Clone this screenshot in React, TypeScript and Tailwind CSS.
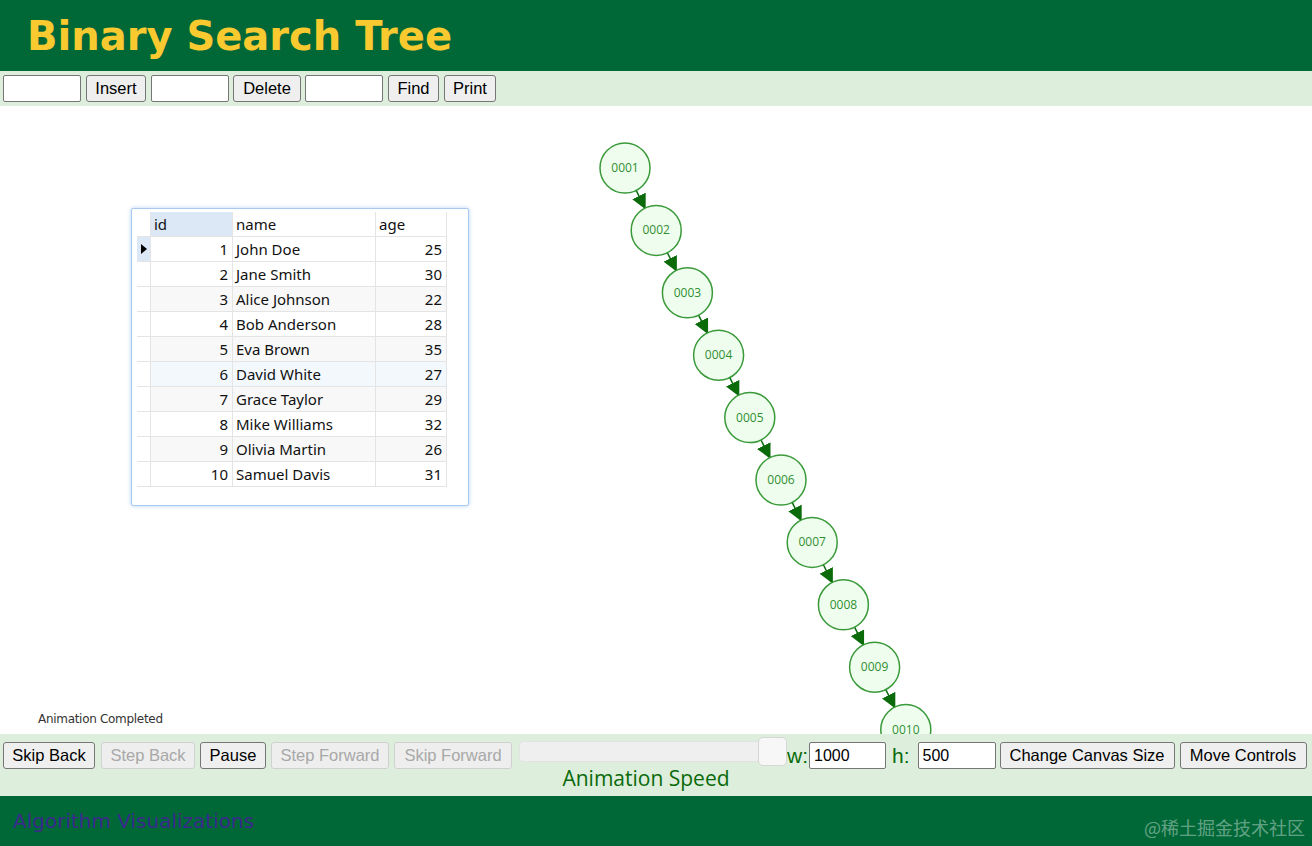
import React from "react";

const rows = [
  { id: 1, name: "John Doe", age: 25 },
  { id: 2, name: "Jane Smith", age: 30 },
  { id: 3, name: "Alice Johnson", age: 22 },
  { id: 4, name: "Bob Anderson", age: 28 },
  { id: 5, name: "Eva Brown", age: 35 },
  { id: 6, name: "David White", age: 27 },
  { id: 7, name: "Grace Taylor", age: 29 },
  { id: 8, name: "Mike Williams", age: 32 },
  { id: 9, name: "Olivia Martin", age: 26 },
  { id: 10, name: "Samuel Davis", age: 31 },
];

const nodes = Array.from({ length: 10 }, (_, i) => ({
  label: String(i + 1).padStart(4, "0"),
  x: 625 + i * 31.2,
  y: 62 + i * 62.4,
}));

function Btn({
  children,
  disabled,
  w = "",
}: {
  children: React.ReactNode;
  disabled?: boolean;
  w?: string;
}) {
  return (
    <button
      className={
        disabled
          ? `${w} h-[27px] shrink-0 rounded-[3px] border border-[#d0d0d0] bg-[#eeeeee] px-[8px] text-center text-[16.5px] text-[#a8a8a8]`
          : `${w} h-[27px] shrink-0 rounded-[3px] border border-[#767676] bg-[#efefef] px-[8px] text-center text-[16.5px] text-black`
      }
      disabled={disabled}
      type="button"
    >
      {children}
    </button>
  );
}

function TextBox({ w, value }: { w: string; value?: string }) {
  return (
    <input
      className={`${w} h-[27px] shrink-0 rounded-[2px] border border-[#767676] bg-white px-[4px] text-[16px] text-black`}
      defaultValue={value}
    />
  );
}

function Tree() {
  const r = 25;
  return (
    <svg className="absolute inset-0" width="1312" height="628">
      <defs>
        <marker
          id="arrow"
          markerHeight="10"
          markerWidth="10"
          orient="auto"
          refX="9"
          refY="5"
          viewBox="0 0 10 10"
        >
          <path d="M0 0 L10 5 L0 10 z" fill="#0b6b0b" />
        </marker>
      </defs>
      {nodes.slice(0, -1).map((n, i) => {
        const next = nodes[i + 1];
        const dx = next.x - n.x;
        const dy = next.y - n.y;
        const len = Math.hypot(dx, dy);
        const ux = dx / len;
        const uy = dy / len;
        return (
          <line
            key={n.label}
            markerEnd="url(#arrow)"
            stroke="#0b6b0b"
            strokeWidth="1.5"
            x1={n.x + ux * r}
            x2={next.x - ux * r}
            y1={n.y + uy * r}
            y2={next.y - uy * r}
          />
        );
      })}
      {nodes.map((n) => (
        <g key={n.label}>
          <circle
            cx={n.x}
            cy={n.y}
            fill="#effdef"
            r={r}
            stroke="#3a9a3a"
            strokeWidth="1.5"
          />
          <text
            fill="#2f8f2f"
            fontFamily="'Open Sans', sans-serif"
            fontSize="12"
            textAnchor="middle"
            x={n.x}
            y={n.y + 4}
          >
            {n.label}
          </text>
        </g>
      ))}
    </svg>
  );
}

function DataGrid() {
  return (
    <div className="absolute left-[131px] top-[102px] h-[298px] w-[338px] rounded-[2px] border border-[#a9c9ee] bg-white p-[3px] pl-[5px] shadow-[0_0_4px_#b7d3f3] [font-family:'Noto_Sans',sans-serif]">
      <div className="grid grid-cols-[14px_82px_143px_71px] text-[15px] leading-[25px] text-[#111]">
        <div className="h-[25px] border-b border-r border-[#e4e4e4]" />
        <div className="h-[25px] border-b border-r border-[#e4e4e4] bg-[#dce8f6] pl-[3px]">
          id
        </div>
        <div className="h-[25px] border-b border-r border-[#e4e4e4] pl-[3px]">
          name
        </div>
        <div className="h-[25px] border-b border-r border-[#e4e4e4] pl-[3px]">
          age
        </div>
        {rows.map((row, i) => {
          const bg =
            i === 5
              ? "bg-[#f3f8fd]"
              : i % 2 === 0 && i > 0
                ? "bg-[#f8f8f8]"
                : "bg-white";
          return (
            <React.Fragment key={row.id}>
              <div
                className={`flex h-[25px] items-center justify-center border-b border-r border-[#e4e4e4] ${
                  i === 0 ? "bg-[#dce8f6]" : "bg-white"
                }`}
              >
                {i === 0 ? (
                  <span className="h-0 w-0 border-y-[5px] border-l-[6px] border-y-transparent border-l-black" />
                ) : null}
              </div>
              <div
                className={`h-[25px] border-b border-r border-[#e4e4e4] pr-[4px] text-right ${bg}`}
              >
                {row.id}
              </div>
              <div
                className={`h-[25px] border-b border-r border-[#e4e4e4] pl-[3px] ${bg}`}
              >
                {row.name}
              </div>
              <div
                className={`h-[25px] border-b border-r border-[#e4e4e4] pr-[4px] text-right ${bg}`}
              >
                {row.age}
              </div>
            </React.Fragment>
          );
        })}
      </div>
    </div>
  );
}

export default function App() {
  return (
    <div className="flex h-[846px] w-[1312px] flex-col overflow-hidden bg-white [font-family:'Liberation_Sans',Arial,sans-serif]">
      <header className="flex h-[71px] items-center bg-[#006837] pl-[27px]">
        <h1 className="text-[40px] font-bold leading-none text-[#f9c930] [font-family:'DejaVu_Sans',Verdana,sans-serif]">
          Binary Search Tree
        </h1>
      </header>

      <div className="flex h-[35px] items-center bg-[#ddeedd] pl-[3px]">
        <TextBox w="w-[78px]" />
        <Btn w="ml-[5px] w-[60px]">Insert</Btn>
        <TextBox w="ml-[5px] w-[78px]" />
        <Btn w="ml-[4px] w-[68px]">Delete</Btn>
        <TextBox w="ml-[4px] w-[78px]" />
        <Btn w="ml-[5px] w-[51px]">Find</Btn>
        <Btn w="ml-[5px] w-[52px]">Print</Btn>
      </div>

      <main className="relative h-[628px]">
        <Tree />
        <DataGrid />
        <p className="absolute left-[38px] top-[604px] text-[12px] tracking-[-0.3px] text-[#333] [font-family:'DejaVu_Sans',Verdana,sans-serif]">
          Animation Completed
        </p>
      </main>

      <div className="flex h-[62px] items-start bg-[#ddeedd] pl-[3px] pt-[8px]">
        <Btn w="w-[92px]">Skip Back</Btn>
        <Btn disabled w="ml-[6px] w-[94px]">
          Step Back
        </Btn>
        <Btn w="ml-[5px] w-[66px]">Pause</Btn>
        <Btn disabled w="ml-[5px] w-[118px]">
          Step Forward
        </Btn>
        <Btn disabled w="ml-[5px] w-[118px]">
          Skip Forward
        </Btn>
        <div className="-mt-[6px] ml-[7px] flex w-[268px] shrink-0 flex-col items-center">
          <div className="relative h-[30px] w-full">
            <div className="absolute left-0 right-[24px] top-[5px] h-[21px] rounded-[4px] border border-[#e2e2e2] bg-[#efefef]" />
            <div className="absolute right-0 top-[1px] h-[29px] w-[29px] rounded-[5px] border border-[#d6d6d6] bg-[#f7f7f7]" />
          </div>
          <span className="mt-[2px] pr-[14px] text-[21px] leading-none text-[#0a6a0a] [font-family:'Open_Sans',sans-serif]">
            Animation Speed
          </span>
        </div>
        <div className="flex h-[27px] items-center gap-[1px]">
          <span className="text-[21px] text-[#0a6a0a]">w:</span>
          <TextBox w="w-[77px]" value="1000" />
        </div>
        <div className="ml-[6px] flex h-[27px] items-center gap-[8px]">
          <span className="text-[21px] text-[#0a6a0a]">h:</span>
          <TextBox w="w-[78px]" value="500" />
        </div>
        <Btn w="ml-[4px] w-[175px]">Change Canvas Size</Btn>
        <Btn w="ml-[5px] w-[127px]">Move Controls</Btn>
      </div>

      <footer className="flex h-[50px] items-center justify-between bg-[#006837] pl-[13px] pr-[7px]">
        <span className="text-[20px] text-[#3a2a8c] [font-family:'DejaVu_Sans',Verdana,sans-serif]">
          Algorithm Visualizations
        </span>
        <span className="mt-[12px] text-[18px] text-white/40 [font-family:'Noto_Sans_CJK_SC',sans-serif]">
          @稀土掘金技术社区
        </span>
      </footer>
    </div>
  );
}
